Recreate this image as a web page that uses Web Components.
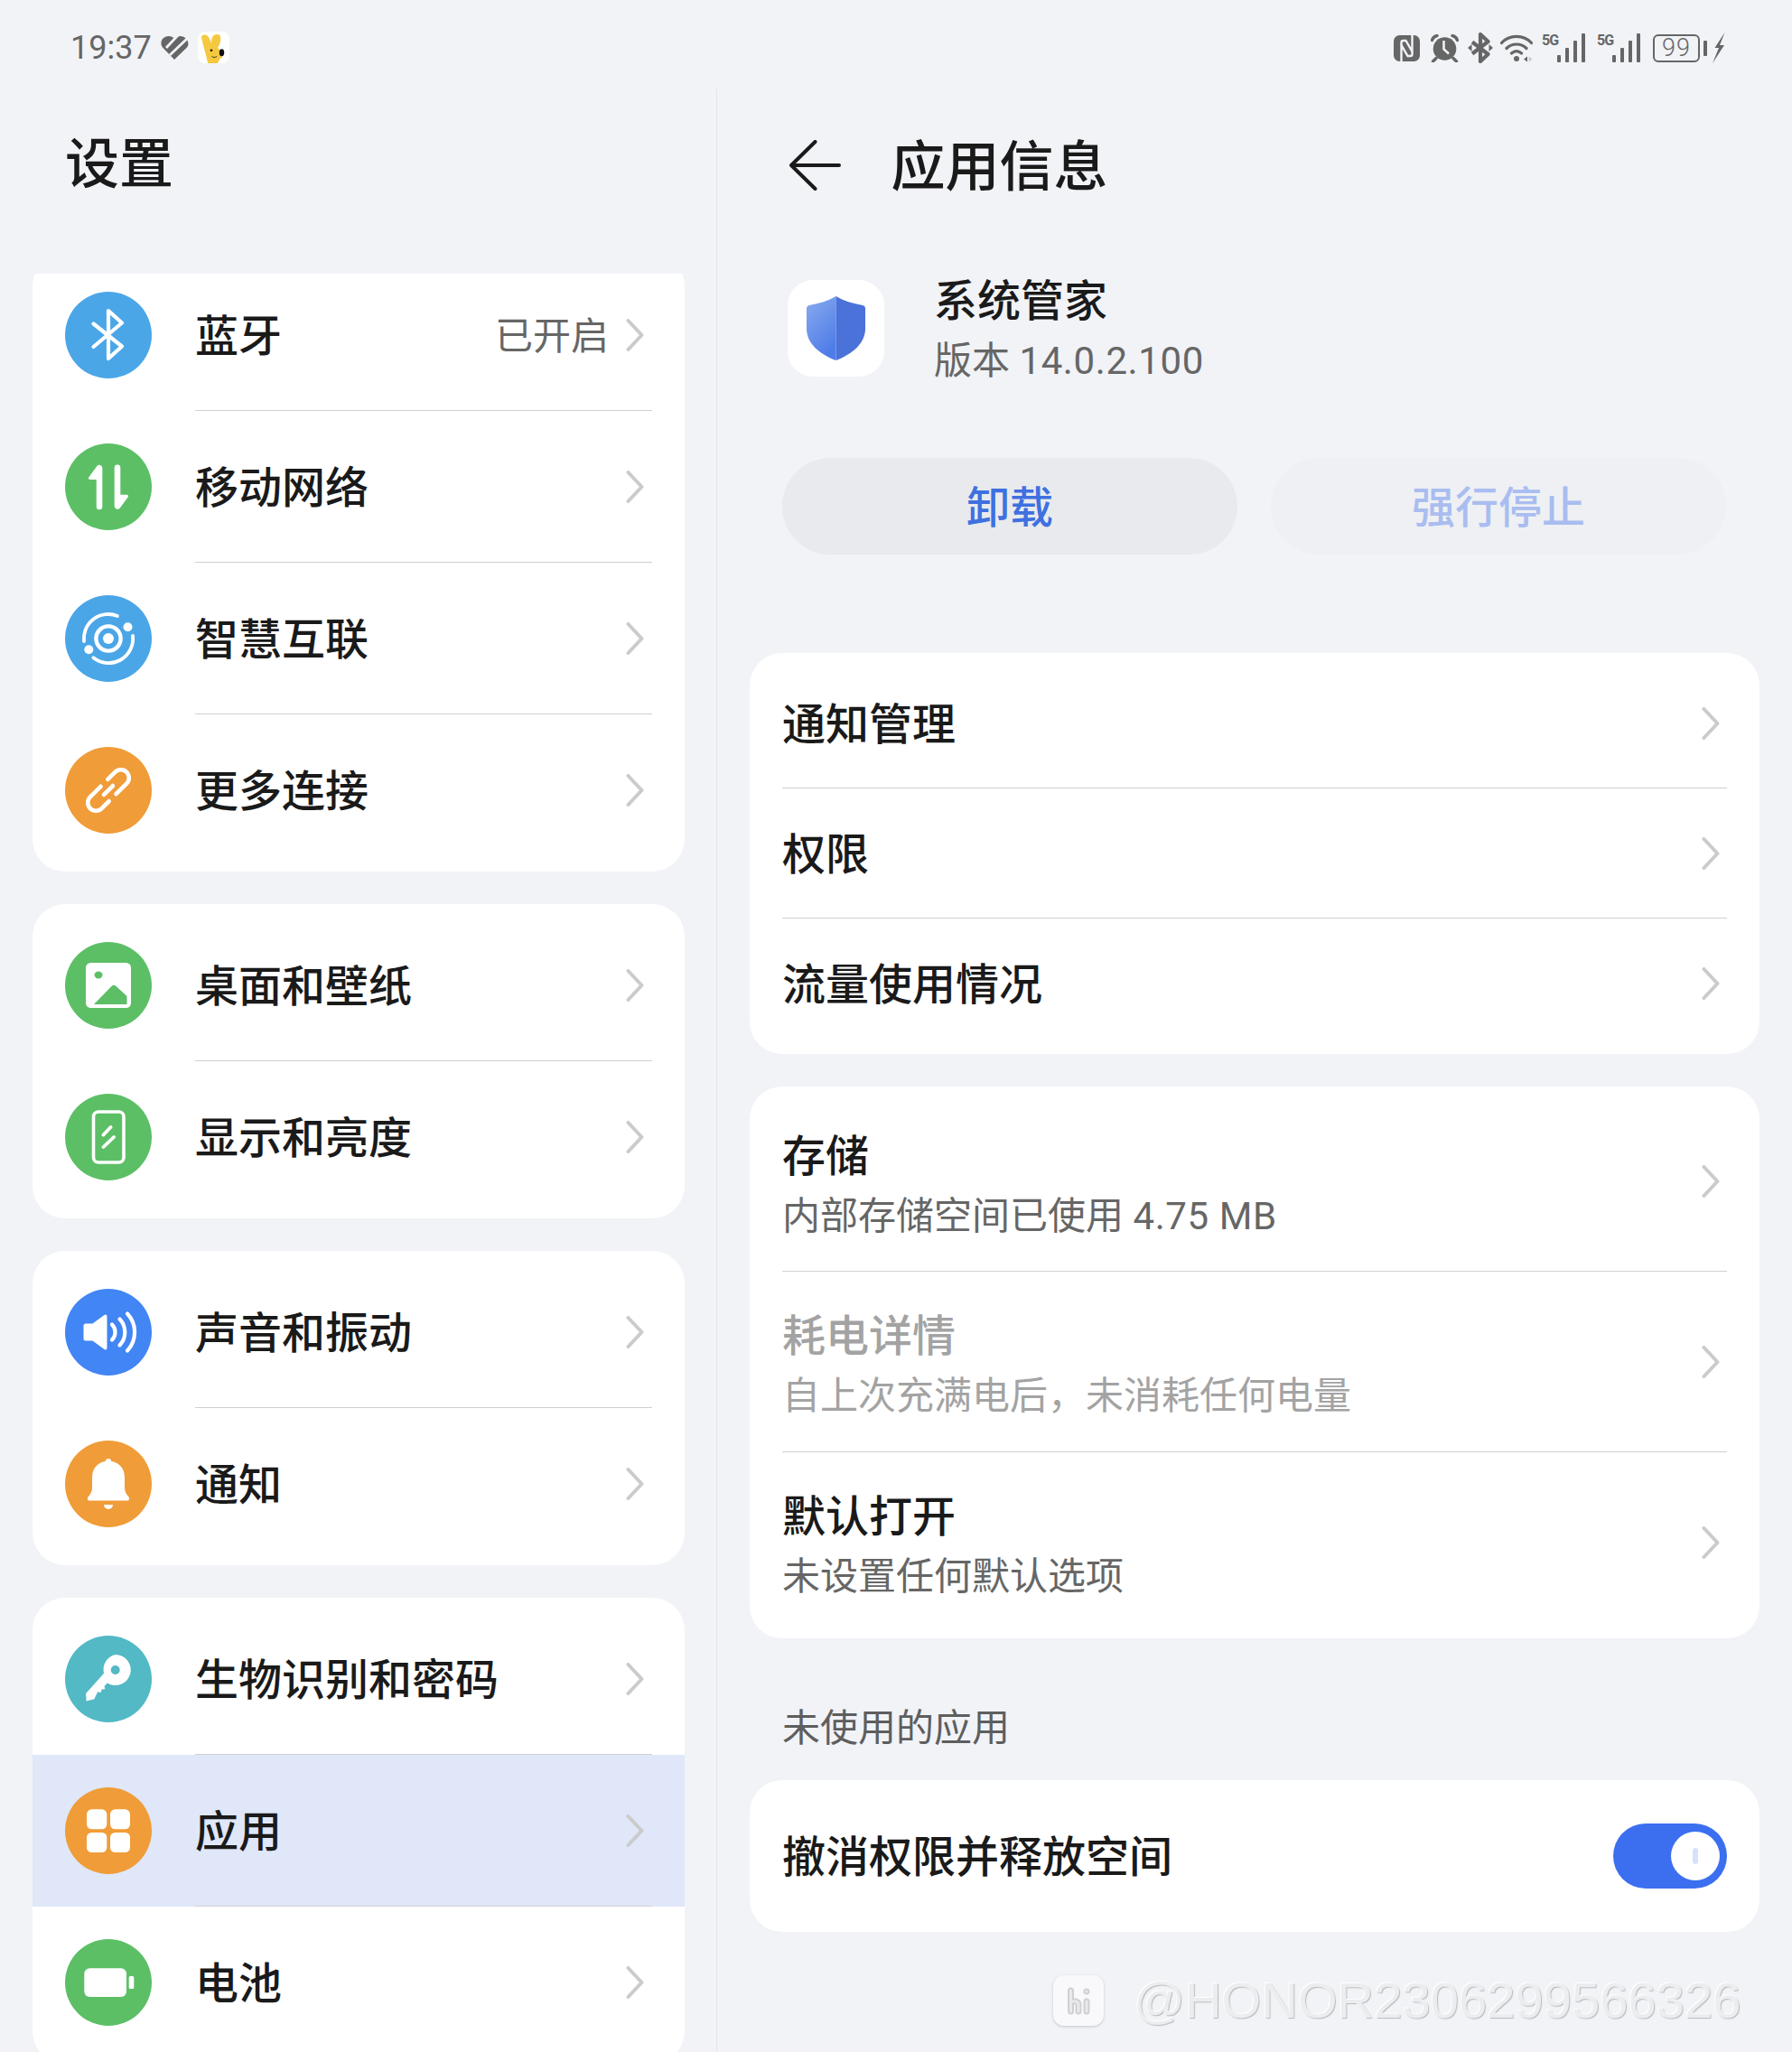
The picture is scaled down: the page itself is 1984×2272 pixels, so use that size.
<!DOCTYPE html>
<html lang="zh-CN">
<head>
<meta charset="utf-8">
<title>设置</title>
<style>
  html, body { margin: 0; padding: 0; background: #f1f3f7; }
  body { width: 1984px; height: 2272px; overflow: hidden; font-family: Roboto, "Noto Sans CJK SC", sans-serif; color: #1a1a1a; }
</style>
</head>
<body>
<settings-app>
  <status-bar slot="status"></status-bar>

  <settings-pane slot="left" heading="设置">
    <settings-group style="margin-top:-22px">
      <settings-row icon="bluetooth" tint="#4ba6e8">蓝牙<span slot="value">已开启</span></settings-row>
      <settings-row icon="mobile" tint="#5cbf66">移动网络</settings-row>
      <settings-row icon="orbit" tint="#4ba6e8">智慧互联</settings-row>
      <settings-row icon="link" tint="#f09c38" last>更多连接</settings-row>
    </settings-group>
    <settings-group>
      <settings-row icon="picture" tint="#5cbf66">桌面和壁纸</settings-row>
      <settings-row icon="display" tint="#5cbf66" last>显示和亮度</settings-row>
    </settings-group>
    <settings-group>
      <settings-row icon="sound" tint="#4285f4">声音和振动</settings-row>
      <settings-row icon="bell" tint="#f09c38" last>通知</settings-row>
    </settings-group>
    <settings-group>
      <settings-row icon="key" tint="#52b9c5">生物识别和密码</settings-row>
      <settings-row icon="apps" tint="#f09c38" selected>应用</settings-row>
      <settings-row icon="battery" tint="#5cbf66" last>电池</settings-row>
    </settings-group>
  </settings-pane>

  <app-info-pane slot="right" heading="应用信息" name="系统管家" version="14.0.2.100">
    <info-card>
      <info-row height="144">通知管理</info-row>
      <info-row height="144">权限</info-row>
      <info-row height="144" last>流量使用情况</info-row>
    </info-card>
    <info-card>
      <info-row height="199">存储<span slot="sub">内部存储空间已使用 <span style="letter-spacing:.6px">4.75 MB</span></span></info-row>
      <info-row height="200" disabled>耗电详情<span slot="sub">自上次充满电后，未消耗任何电量</span></info-row>
      <info-row height="200" last>默认打开<span slot="sub">未设置任何默认选项</span></info-row>
    </info-card>
    <section-label>未使用的应用</section-label>
    <info-card flush>
      <info-row height="168" last>撤消权限并释放空间<toggle-switch slot="end"></toggle-switch></info-row>
    </info-card>
  </app-info-pane>

  <water-mark slot="overlay">@HONOR2306299566326</water-mark>
</settings-app>

<script>
// white glyphs for the round settings icons, all on a 96 box
const ICONS = {
  bluetooth: `<path d="M31.500 35.500 63 60.500 48 74V21l15 13.500L31.500 61" fill="none" stroke="#fff" stroke-width="4.200" stroke-linecap="round" stroke-linejoin="round"/>`,
  mobile: `<path d="M34.700 40H27.600a1.600 1.600 0 0 1-1.200-2.700L35.400 25a3.400 3.400 0 0 1 5.900 2.100V70a3.300 3.300 0 0 1-6.600 0Z" fill="#fff"/>
    <path d="M61.300 56.700h7.100a1.600 1.600 0 0 1 1.200 2.700L60.600 71.700a3.400 3.400 0 0 1-5.900-2.100V26.700a3.300 3.300 0 0 1 6.600 0Z" fill="#fff"/>`,
  orbit: `<circle cx="48" cy="48" r="6" fill="#fff"/><circle cx="48" cy="48" r="13.600" fill="none" stroke="#fff" stroke-width="4.400"/>
    <path d="M21 51A27 27 0 0 1 58 23M75 45A27 27 0 0 1 31.400 69.300" fill="none" stroke="#fff" stroke-width="3.800" stroke-linecap="round"/>
    <circle cx="69.500" cy="35.300" r="5" fill="#fff"/><circle cx="26.300" cy="60.300" r="5" fill="#fff"/>`,
  link: `<g transform="rotate(-45 48 48)" fill="none" stroke="#fff" stroke-width="4.600" stroke-linecap="round">
    <path d="M45 39H28.500a9 9 0 0 0 0 18H40"/><path d="M51 57H67.500a9 9 0 0 0 0-18H56"/><path d="M41 48H55"/></g>`,
  picture: `<rect x="23" y="23" width="50" height="50" rx="5.500" fill="#fff"/><ellipse cx="37" cy="36.500" rx="4.500" ry="4" fill="#5cbf66"/>
    <path d="M32 69 51.500 49a3.500 3.500 0 0 1 5 0L67 58.500a3 3 0 0 1 1.500 2.500V69Z" fill="#5cbf66"/>`,
  display: `<rect x="31.500" y="20" width="33.500" height="56" rx="5.500" fill="none" stroke="#fff" stroke-width="3.600"/>
    <path d="M42.500 45.500 50.500 37M42.500 59 54 48" fill="none" stroke="#fff" stroke-width="3.800" stroke-linecap="round"/>`,
  sound: `<path d="M20.500 41a2.500 2.500 0 0 1 2.500-2.500h7.500L43.500 29a1.800 1.800 0 0 1 3 1.400v35.200a1.800 1.800 0 0 1-3 1.400L30.500 57.500H23a2.500 2.500 0 0 1-2.500-2.500Z" fill="#fff"/>
    <path d="M52 39.500a12 12 0 0 1 0 17M60.500 33.500a21 21 0 0 1 0 29M69 27.500a30 30 0 0 1 0 41" fill="none" stroke="#fff" stroke-width="4.200" stroke-linecap="round"/>`,
  bell: `<path d="M48 20a3.500 3.500 0 0 1 3.400 3C61 24.500 66 32 66 41v11c0 4 1.500 7 4.500 10.500 1.200 1.500.7 4-1.500 4H27c-2.200 0-2.700-2.500-1.500-4C28.500 59 30 56 30 52V41c0-9 5-16.500 14.600-18A3.500 3.500 0 0 1 48 20Z" fill="#fff"/>
    <path d="M43 71h10a5 5 0 0 1-10 0Z" fill="#fff"/>`,
  key: `<path fill-rule="evenodd" d="M55.700 21a17 17 0 1 1-8.800 31.500l-3.300 3.300.6 3.400-3.600.3-1 3.400-3.400-.7-3.900 8.100-8.700 2.100-.5-8.300L43 41.700A17 17 0 0 1 55.700 21Zm0 12a5 5 0 1 0 0 10 5 5 0 0 0 0-10Z" fill="#fff"/>`,
  apps: `<g fill="#fff"><rect x="24" y="24.300" width="22.300" height="22" rx="5.500"/><rect x="50" y="24.300" width="22" height="22" rx="5.500"/>
    <rect x="24" y="50" width="22.300" height="22" rx="5.500"/><rect x="50" y="50" width="22" height="22" rx="5.500"/></g>`,
  battery: `<rect x="21.300" y="32.300" width="46.700" height="31.700" rx="6" fill="#fff"/><rect x="70.700" y="41" width="5.600" height="14" rx="1.500" fill="#fff"/>`,
}

class RoundIcon extends HTMLElement {
  constructor() {
    super()
    const shadow = this.attachShadow({ mode: 'open' })
    shadow.innerHTML = `
      <style>
        :host { display: block; width: 96px; height: 96px; flex: none; }
        svg { display: block; width: 96px; height: 96px; }
      </style>
      <svg viewBox="0 0 96 96">
        <circle cx="48" cy="48" r="48" fill="${this.getAttribute('tint')}"/>
        ${ICONS[this.getAttribute('name')]}
      </svg>`
  }
}
customElements.define('round-icon', RoundIcon)

class ChevronIcon extends HTMLElement {
  constructor() {
    super()
    const shadow = this.attachShadow({ mode: 'open' })
    shadow.innerHTML = `
      <style>
        :host { display: block; width: 20px; height: 36px; flex: none; }
        svg { display: block; }
      </style>
      <svg width="20" height="36" viewBox="0 0 20 36">
        <path d="M2.500 2 17.500 18 2.500 34" fill="none" stroke="#cbcbcb" stroke-width="4" stroke-linecap="round" stroke-linejoin="round"/>
      </svg>`
  }
}
customElements.define('chevron-icon', ChevronIcon)

class StatusBar extends HTMLElement {
  constructor() {
    super()
    const signal = `
      <span class="signal"><span class="five">5G</span>
        <svg width="32" height="32" viewBox="0 0 32 32" fill="#666">
          <rect x="0" y="24" width="4" height="8" rx="1"/><rect x="9" y="16" width="4" height="16" rx="1"/>
          <rect x="18" y="8" width="4" height="24" rx="1"/><rect x="27" y="0" width="4" height="32" rx="1"/>
        </svg></span>`
    const shadow = this.attachShadow({ mode: 'open' })
    shadow.innerHTML = `
      <style>
        :host { display: flex; align-items: flex-start; justify-content: space-between; height: 98px; box-sizing: border-box; padding: 35px 74px 0 78px; color: #666; }
        .left, .right { display: flex; align-items: center; }
        .time { font: 400 36px/34px Roboto, sans-serif; width: 91px; }
        .rabbit { margin-left: 10px; }
        svg { display: block; flex: none; }
        .right { margin-top: 2px; height: 32px; }
        .signal { position: relative; display: block; width: 49px; height: 32px; margin-left: 10px; }
        .signal svg { position: absolute; right: 0; top: 0; }
        .five { position: absolute; left: 0; top: 0; font: 700 16px/15px Roboto, sans-serif; letter-spacing: -1px; }
        .battery { display: flex; align-items: center; margin-left: 13px; }
        .cell { box-sizing: border-box; width: 52px; height: 31px; border: 2.500px solid #666; border-radius: 6px; font: 300 27px/26px Roboto, sans-serif; text-align: center; letter-spacing: 1px; }
        .cap { width: 4px; height: 17px; background: #666; border-radius: 1px; margin-left: 4px; }
      </style>
      <div class="left">
        <span class="time">19:37</span>
        <svg width="31" height="27" viewBox="0 0 31 27" style="margin-left:9px">
          <path d="M15 27 2 13.500C-2 8 2 1 8.500 1c3 0 5 1 6.500 3 1.500-2 4-3 6.500-3C28 1 33 8 29 13.500Z" fill="#666"/>
          <path d="M6 14 19 0M10 22 31 2" stroke="#f1f3f7" stroke-width="2.800" fill="none"/>
        </svg>
        <svg class="rabbit" width="35" height="35" viewBox="0 0 35 35">
          <rect width="35" height="35" rx="8" fill="#fff"/>
          <path d="M4 6c1-3 5-3 7-1 2 2 3 5 4 8 0-4 1-8 3-9 3-2 7-1 7 2 1 4-1 9-3 12 3 2 5 6 5 10l-3 3-2 4H11C10 28 5 13 4 6Z" fill="#f5c93f"/>
          <ellipse cx="26.500" cy="23.300" rx="2.700" ry="4" fill="#111"/>
          <circle cx="15" cy="20.700" r="1.300" fill="#111"/>
          <path d="M15.500 27.500c1.500 1.300 4 1.300 5.500 0" fill="none" stroke="#333" stroke-width="1"/>
        </svg>
      </div>
      <div class="right">
        <svg width="29" height="29" viewBox="0 0 29 29">
          <rect width="29" height="29" rx="6.500" fill="#666"/>
          <path d="M8.500 29V8Q8.500 6 10.500 6H13.500L21 19M20.500 0V21Q20.500 23 18.500 23H15.500L8 10" fill="none" stroke="#f1f3f7" stroke-width="2.400"/>
        </svg>
        <svg width="31" height="31" viewBox="0 0 31 31" style="margin-left:12px">
          <circle cx="15.500" cy="16" r="12.800" fill="#666"/>
          <path d="M1.500 6.500C2.500 3.500 4.500 2 7 1.500M29.500 6.500C28.500 3.500 26.500 2 24 1.500M6 26.500l-3.500 3.500M25 26.500l3.500 3.500" fill="none" stroke="#666" stroke-width="3.400" stroke-linecap="round"/>
          <path d="M14.500 7v9.500l5.500 5" fill="none" stroke="#f1f3f7" stroke-width="2.500"/>
        </svg>
        <svg width="28" height="34" viewBox="0 0 28 34" style="margin-left:10px" fill="none" stroke="#666">
          <path d="M5 10.500 22.500 24 14 32V2l8.500 8L5 23.500" stroke-width="4.200" stroke-linejoin="round"/>
          <path d="M0 17l4.500-4v8ZM28 17l-4.500-4v8Z" fill="#666" stroke="none"/>
        </svg>
        <svg width="36" height="32" viewBox="0 0 36 32" style="margin-left:8px" fill="none" stroke="#666" stroke-linecap="round">
          <path d="M1.500 10.500C10 1 26 1 34.500 10.500M7 16.500c6-6 16-6 22 0M12.500 22c3.500-3 7.500-3 11 0" stroke-width="3.200"/>
          <circle cx="18" cy="28" r="3" fill="#666" stroke="none"/>
          <path d="M26 28.500l4-3v6Z" fill="#666" stroke="none"/>
          <path d="M31.500 25.500l4 3-4 3Z" fill="#c9cacc" stroke="none"/>
        </svg>
        ${signal}${signal.replace('class="signal"', 'class="signal" style="margin-left:12px"')}
        <span class="battery"><span class="cell">99</span><span class="cap"></span></span>
        <svg width="14" height="34" viewBox="0 0 14 34" style="margin-left:6px" fill="#666">
          <path d="M13.500 0 2.500 17H7L0 34 13 14H8Z"/>
        </svg>
      </div>`
  }
}
customElements.define('status-bar', StatusBar)

class SettingsApp extends HTMLElement {
  constructor() {
    super()
    const shadow = this.attachShadow({ mode: 'open' })
    shadow.innerHTML = `
      <style>
        :host { display: grid; position: relative; width: 1984px; height: 2272px; overflow: hidden;
          grid-template-columns: 794px 1190px; grid-template-rows: 98px 1fr;
          grid-template-areas: 'status status' 'left right'; }
        .status { grid-area: status; }
        .left { grid-area: left; min-height: 0; }
        .right { grid-area: right; min-height: 0; }
      </style>
      <div class="status"><slot name="status"></slot></div>
      <div class="left"><slot name="left"></slot></div>
      <div class="right"><slot name="right"></slot></div>
      <slot name="overlay"></slot>`
  }
}
customElements.define('settings-app', SettingsApp)

class SettingsPane extends HTMLElement {
  constructor() {
    super()
    const shadow = this.attachShadow({ mode: 'open' })
    shadow.innerHTML = `
      <style>
        :host { display: flex; flex-direction: column; height: 2174px; box-sizing: border-box; border-right: 1px solid #e3e5e9; }
        h1 { margin: 0 0 0 72px; height: 164px; flex: none; font: 500 60px/170px Roboto, "Noto Sans CJK SC", sans-serif; margin-bottom: 41px; }
        .list { flex: 1; min-height: 0; overflow: hidden; padding: 0 35px 0 36px; display: flex; flex-direction: column; gap: 36px; }
      </style>
      <h1>${this.getAttribute('heading')}</h1>
      <div class="list"><slot></slot></div>`
  }
}
customElements.define('settings-pane', SettingsPane)

class SettingsGroup extends HTMLElement {
  constructor() {
    super()
    const shadow = this.attachShadow({ mode: 'open' })
    shadow.innerHTML = `
      <style>
        :host { display: block; flex: none; background: #fff; border-radius: 36px; padding: 6px 0; overflow: hidden; }
      </style>
      <slot></slot>`
  }
}
customElements.define('settings-group', SettingsGroup)

class SettingsRow extends HTMLElement {
  constructor() {
    super()
    const shadow = this.attachShadow({ mode: 'open' })
    shadow.innerHTML = `
      <style>
        :host { display: flex; align-items: center; height: 168px; padding-left: 36px; }
        :host([selected]) { background: #dfe7f9; }
        .body { flex: 1; align-self: stretch; display: flex; align-items: center; margin: 0 36px 0 48px; padding-right: 9px;
          font: 500 48px/60px Roboto, "Noto Sans CJK SC", sans-serif; color: #1a1a1a; border-bottom: 1px solid #cfd0d4; }
        :host([last]) .body { border-bottom-color: transparent; }
        .label { flex: 1; padding-top: 4px; }
        .value { font: 400 42px/56px Roboto, "Noto Sans CJK SC", sans-serif; color: #666; margin-right: 19px; padding-top: 4px; }
      </style>
      <round-icon name="${this.getAttribute('icon')}" tint="${this.getAttribute('tint')}"></round-icon>
      <div class="body">
        <span class="label"><slot></slot></span>
        <span class="value"><slot name="value"></slot></span>
        <chevron-icon></chevron-icon>
      </div>`
  }
}
customElements.define('settings-row', SettingsRow)

class AppInfoPane extends HTMLElement {
  constructor() {
    super()
    const shadow = this.attachShadow({ mode: 'open' })
    shadow.innerHTML = `
      <style>
        :host { display: block; padding: 0 36px; }
        header { display: flex; align-items: center; height: 170px; margin-bottom: 41px; padding-left: 44px; }
        header svg { display: block; flex: none; }
        h1 { margin: 6px 0 0 55.500px; font: 500 60px/80px Roboto, "Noto Sans CJK SC", sans-serif; }
        .app { display: flex; align-items: center; height: 108px; padding-left: 42px; margin-bottom: 90px; }
        .logo { width: 107px; height: 107px; border-radius: 28px; background: #fff; display: flex; align-items: center; justify-content: center; flex: none; }
        .name { margin-left: 55px; padding-top: 5px; display: flex; flex-direction: column; gap: 8.500px; }
        .title { font: 500 48px/60px Roboto, "Noto Sans CJK SC", sans-serif; }
        .version { font: 400 42px/54px Roboto, "Noto Sans CJK SC", sans-serif; color: #666; }
        .version b { font-weight: 400; letter-spacing: .6px; }
        .actions { display: grid; grid-template-columns: 504px 504px; gap: 37px; padding-left: 36px; margin-bottom: 109px; }
        .btn { box-sizing: border-box; height: 107px; padding-top: 5px; border-radius: 54px; display: flex; align-items: center; justify-content: center;
          font: 500 48px/60px Roboto, "Noto Sans CJK SC", sans-serif; }
        .uninstall { background: #e8eaed; color: #3f70e0; }
        .stop { background: #eef0f3; color: #a9bdf0; }
        .cards { display: flex; flex-direction: column; gap: 36px; }
      </style>
      <header>
        <svg width="57" height="56" viewBox="0 0 57 56" fill="none" stroke="#1a1a1a" stroke-width="4" stroke-linecap="round" stroke-linejoin="round">
          <path d="M2 28H55M28.500 2 2 28 28.500 54"/>
        </svg>
        <h1>${this.getAttribute('heading')}</h1>
      </header>
      <div class="app">
        <div class="logo">
          <svg width="65" height="71" viewBox="0 0 65 71">
            <defs><linearGradient id="shield" x1="0" y1="0" x2=".5" y2="1"><stop offset="0" stop-color="#8aabee"/><stop offset="1" stop-color="#4f7de8"/></linearGradient></defs>
            <path d="M32.500 0C24 5 14 8 3 10c-2 .4-3 1.500-3 3.500V36c0 16 14 28 32.500 35Z" fill="url(#shield)"/>
            <path d="M32.500 0C41 5 51 8 62 10c2 .4 3 1.500 3 3.500V36c0 16-14 28-32.500 35Z" fill="#4a72d8"/>
          </svg>
        </div>
        <div class="name">
          <span class="title">${this.getAttribute('name')}</span>
          <span class="version">版本 <b>${this.getAttribute('version')}</b></span>
        </div>
      </div>
      <div class="actions">
        <div class="btn uninstall">卸载</div>
        <div class="btn stop">强行停止</div>
      </div>
      <div class="cards"><slot></slot></div>`
  }
}
customElements.define('app-info-pane', AppInfoPane)

class InfoCard extends HTMLElement {
  constructor() {
    super()
    const shadow = this.attachShadow({ mode: 'open' })
    shadow.innerHTML = `
      <style>
        :host { display: block; background: #fff; border-radius: 36px; padding: 6px 0; overflow: hidden; }
        :host([flush]) { padding: 0; }
      </style>
      <slot></slot>`
  }
}
customElements.define('info-card', InfoCard)

class InfoRow extends HTMLElement {
  constructor() {
    super()
    const shadow = this.attachShadow({ mode: 'open' })
    shadow.innerHTML = `
      <style>
        :host { display: block; padding: 0 36px; }
        .row { box-sizing: border-box; height: ${this.getAttribute('height')}px; display: flex; align-items: center; border-bottom: 1px solid #cfd0d4; padding-right: 8px; }
        :host([last]) .row { border-bottom-color: transparent; }
        .text { flex: 1; padding-top: 4px; display: flex; flex-direction: column; gap: 9px; }
        .text:has(.sub.on) { padding-top: 8px; }
        .title { font: 500 48px/60px Roboto, "Noto Sans CJK SC", sans-serif; color: #1a1a1a; }
        .sub { font: 400 42px/54px Roboto, "Noto Sans CJK SC", sans-serif; color: #666; }
        :host([disabled]) .title { color: #a3a3a3; }
        :host([disabled]) .sub { color: #a3a3a3; }
        .end { display: flex; margin-right: -8px; }
        .sub:not(.on) { display: none; }
      </style>
      <div class="row">
        <div class="text">
          <span class="title"><slot></slot></span>
          <span class="sub"><slot name="sub"></slot></span>
        </div>
        <div class="end"><slot name="end"><chevron-icon style="margin-right:8px"></chevron-icon></slot></div>
      </div>`
    shadow.querySelector('slot[name=sub]').addEventListener('slotchange', (e) => {
      e.target.parentElement.classList.toggle('on', e.target.assignedNodes().length > 0)
    })
  }
}
customElements.define('info-row', InfoRow)

class SectionLabel extends HTMLElement {
  constructor() {
    super()
    const shadow = this.attachShadow({ mode: 'open' })
    shadow.innerHTML = `
      <style>
        :host { display: block; height: 121px; padding-left: 36px; margin-bottom: -36px;
          font: 400 42px/127px Roboto, "Noto Sans CJK SC", sans-serif; color: #5e5e5e; }
      </style>
      <slot></slot>`
  }
}
customElements.define('section-label', SectionLabel)

class ToggleSwitch extends HTMLElement {
  constructor() {
    super()
    const shadow = this.attachShadow({ mode: 'open' })
    shadow.innerHTML = `
      <style>
        :host { display: flex; width: 126px; height: 72px; box-sizing: border-box; padding: 9px 8px; justify-content: flex-end; background: #3b6ff0; border-radius: 36px; }
        .thumb { width: 54px; height: 54px; border-radius: 50%; background: #fff; display: flex; align-items: center; justify-content: center; }
        .thumb i { width: 6px; height: 18px; border-radius: 3px; background: #d6e2f8; }
      </style>
      <div class="thumb"><i></i></div>`
  }
}
customElements.define('toggle-switch', ToggleSwitch)

class WaterMark extends HTMLElement {
  constructor() {
    super()
    const shadow = this.attachShadow({ mode: 'open' })
    shadow.innerHTML = `
      <style>
        :host { position: absolute; left: 1166px; top: 2186px; display: flex; align-items: center; gap: 33px; }
        .badge { width: 56px; height: 56px; border-radius: 12px; background: #f9f9fb; box-shadow: 0 1px 3px #c4c5c9; flex: none; }
        svg { display: block; }
        .text { font: 400 56.200px/57px "Liberation Sans", Arial, sans-serif; color: #ecedef;
          text-shadow: -1px -1px 1px #fff, 1px 1px 1px #b9babd; }
      </style>
      <span class="badge">
        <svg width="56" height="56" viewBox="0 0 56 56" fill="none" stroke-linecap="round" stroke-linejoin="round">
          <g stroke="#cfd0d4" stroke-width="7">
            <path d="M19.500 17V40M19.500 29H24Q28 29 28 33V40M37 29V40"/><path d="M37 18v.1"/>
          </g>
          <g stroke="#e9e9ec" stroke-width="3">
            <path d="M19.500 17V40M19.500 29H24Q28 29 28 33V40M37 29V40"/><path d="M37 18v.1"/>
          </g>
        </svg>
      </span>
      <span class="text"><slot></slot></span>`
  }
}
customElements.define('water-mark', WaterMark)
</script>
</body>
</html>
